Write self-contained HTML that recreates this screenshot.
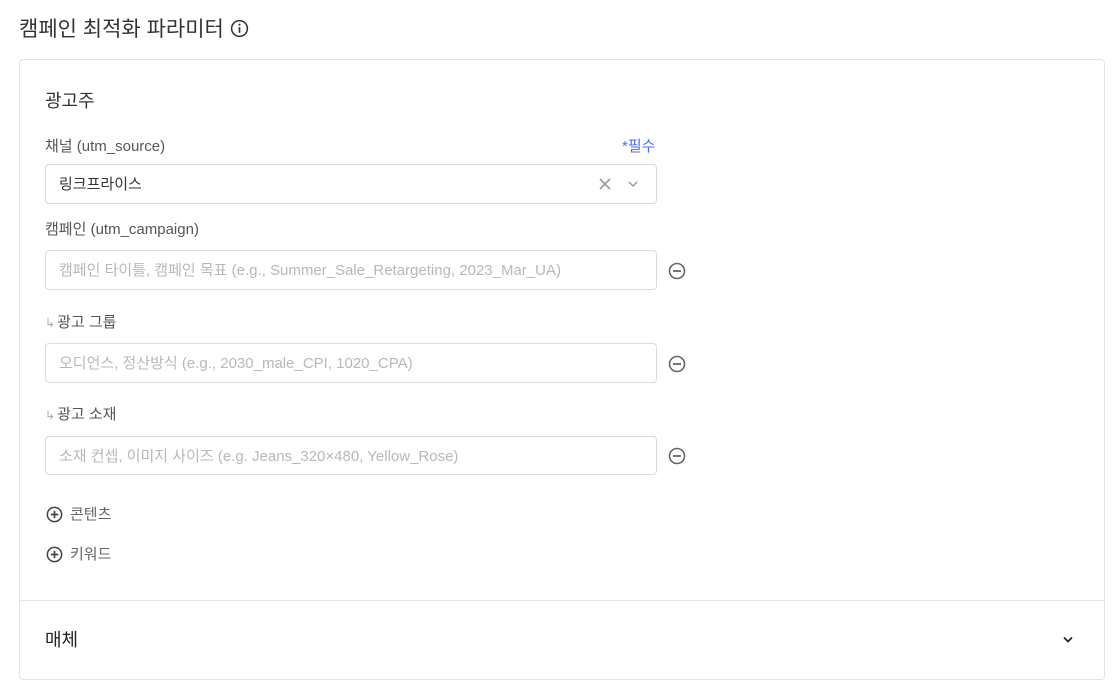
<!DOCTYPE html>
<html><head><meta charset="utf-8"><style>
*{box-sizing:border-box;margin:0;padding:0}
body{width:1115px;height:692px;background:#fff;font-family:"Liberation Sans","Noto Sans CJK KR",sans-serif;position:relative;overflow:hidden;color:#333}
.a{position:absolute}
.t{font-size:21px;color:#333;left:19px;top:17px;line-height:26px}
.card{left:19px;top:59px;width:1086px;height:621px;border:1px solid #e2e4e8;border-radius:4px}
.div{left:20px;top:600px;width:1084px;height:1px;background:#e2e4e8}
.lbl{font-size:15px;color:#555;left:45px;line-height:20px}
.inp{left:45px;width:612px;height:40px;border:1px solid #d8dce3;border-radius:4px;font-size:15px;color:#b5b8bd;padding-left:13px;line-height:40px}
.ar{color:#aaa;font-size:12px;margin-right:2px}
</style></head><body>
<div class="a t">캠페인 최적화 파라미터 <svg width="19" height="19" viewBox="0 0 20 20" style="vertical-align:-2px"><circle cx="10" cy="10" r="8.3" fill="none" stroke="#333" stroke-width="1.6"/><rect x="9.1" y="8.5" width="1.8" height="6" fill="#333"/><circle cx="10" cy="6" r="1.1" fill="#333"/></svg></div>
<div class="a card"></div>
<div class="a div"></div>
<div class="a" style="left:45px;top:89px;font-size:18px;color:#333;line-height:24px">광고주</div>
<div class="a lbl" style="top:137px">채널 (utm_source)</div>
<div class="a" style="left:622px;top:137px;font-size:15px;color:#4a6cf7;line-height:20px">*필수</div>
<div class="a inp" style="top:164px;color:#333">링크프라이스</div>
<svg class="a" style="left:598px;top:177px" width="14" height="14" viewBox="0 0 14 14"><path d="M2 2L12 12M12 2L2 12" stroke="#999" stroke-width="1.6"/></svg>
<svg class="a" style="left:627px;top:180px" width="12" height="8" viewBox="0 0 12 8"><path d="M2 2L6 6L10 2" stroke="#999" stroke-width="1.4" fill="none"/></svg>
<div class="a lbl" style="top:220px">캠페인 (utm_campaign)</div>
<div class="a inp" style="top:250px">캠페인 타이틀, 캠페인 목표 (e.g., Summer_Sale_Retargeting, 2023_Mar_UA)</div>
<div class="a lbl" style="top:313px"><span class="ar">↳</span>광고 그룹</div>
<div class="a inp" style="top:343px">오디언스, 정산방식 (e.g., 2030_male_CPI, 1020_CPA)</div>
<div class="a lbl" style="top:405px"><span class="ar">↳</span>광고 소재</div>
<div class="a inp" style="top:436px;height:39px;line-height:39px">소재 컨셉, 이미지 사이즈 (e.g. Jeans_320×480, Yellow_Rose)</div>
<svg class="a" style="left:667px;top:261px" width="20" height="20" viewBox="0 0 20 20"><circle cx="10" cy="10" r="7.5" fill="none" stroke="#666" stroke-width="1.6"/><path d="M6 10H14" stroke="#666" stroke-width="1.8"/></svg>
<svg class="a" style="left:667px;top:354px" width="20" height="20" viewBox="0 0 20 20"><circle cx="10" cy="10" r="7.5" fill="none" stroke="#666" stroke-width="1.6"/><path d="M6 10H14" stroke="#666" stroke-width="1.8"/></svg>
<svg class="a" style="left:667px;top:446px" width="20" height="20" viewBox="0 0 20 20"><circle cx="10" cy="10" r="7.5" fill="none" stroke="#666" stroke-width="1.6"/><path d="M6 10H14" stroke="#666" stroke-width="1.8"/></svg>
<svg class="a" style="left:45px;top:505px" width="19" height="19" viewBox="0 0 20 20"><circle cx="10" cy="10" r="7.5" fill="none" stroke="#444" stroke-width="1.6"/><path d="M6 10H14M10 6V14" stroke="#444" stroke-width="1.8"/></svg>
<div class="a" style="left:70px;top:505px;font-size:15px;color:#666;line-height:20px">콘텐츠</div>
<svg class="a" style="left:45px;top:545px" width="19" height="19" viewBox="0 0 20 20"><circle cx="10" cy="10" r="7.5" fill="none" stroke="#444" stroke-width="1.6"/><path d="M6 10H14M10 6V14" stroke="#444" stroke-width="1.8"/></svg>
<div class="a" style="left:70px;top:545px;font-size:15px;color:#666;line-height:20px">키워드</div>
<div class="a" style="left:45px;top:628px;font-size:18px;color:#222;line-height:24px">매체</div>
<svg class="a" style="left:1062px;top:635px" width="12" height="9" viewBox="0 0 12 9"><path d="M2 2.5L6 6.5L10 2.5" stroke="#222" stroke-width="1.8" fill="none"/></svg>
</body></html>
